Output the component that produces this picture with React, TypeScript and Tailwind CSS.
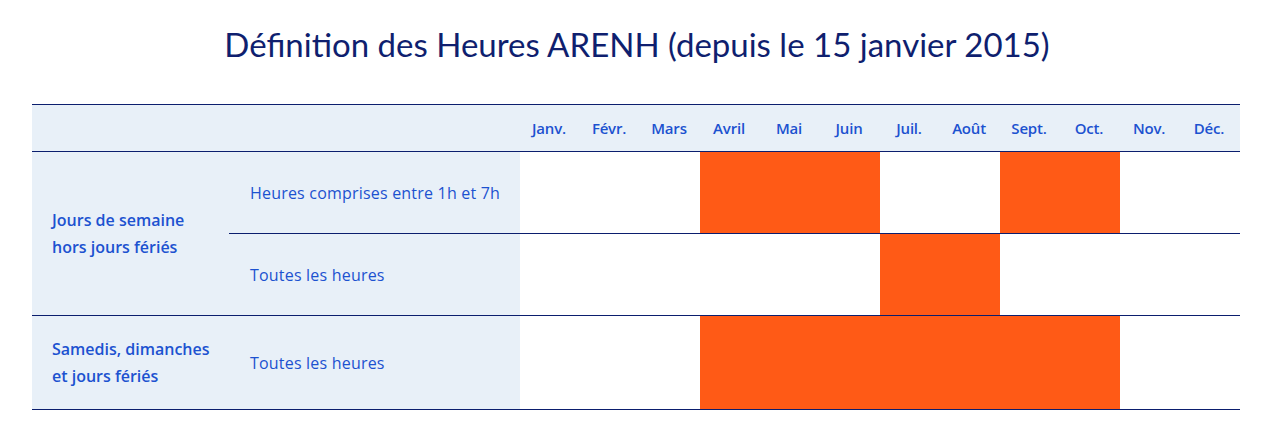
const months = ["Janv.", "Févr.", "Mars", "Avril", "Mai", "Juin", "Juil.", "Août", "Sept.", "Oct.", "Nov.", "Déc."];

// index of months that are ARENH hours, per row
const weekdayNight = [3, 4, 5, 8, 9];
const weekdayAll = [6, 7];
const weekendAll = [3, 4, 5, 6, 7, 8, 9];

function MonthCells({ active }: { active: number[] }) {
  return (
    <div className="grid flex-1 grid-cols-12">
      {months.map((m, i) => (
        <div key={m} className={active.includes(i) ? "bg-[#ff5a16]" : "bg-white"} />
      ))}
    </div>
  );
}

function SubRow({ label, active, className }: { label: string; active: number[]; className: string }) {
  return (
    <div className={`flex ${className}`}>
      <div className="flex w-[291px] items-center bg-[#e8f0f8] pl-[21px] text-[16px] tracking-[0.2px] text-[#1c52d0]">{label}</div>
      <MonthCells active={active} />
    </div>
  );
}

export default function App() {
  return (
    <div className="min-h-[436px] bg-white font-['Open_Sans',sans-serif]">
      <h1 className="pt-[22px] text-center text-[33px] font-normal leading-[44px] text-[#0f1f6f] font-['Lato',sans-serif]">
        Définition des Heures ARENH (depuis le 15 janvier 2015)
      </h1>

      <div className="ml-[32px] mt-[38px] w-[1208px]">
        {/* header */}
        <div className="flex h-[48px] border-y border-[#0b1e6e] bg-[#e8f0f8]">
          <div className="w-[488px]" />
          <div className="grid flex-1 grid-cols-12">
            {months.map((m) => (
              <div key={m} className="flex items-center justify-center pr-[2px] text-[15px] font-semibold tracking-[-0.2px] text-[#1c52d0]">
                {m}
              </div>
            ))}
          </div>
        </div>

        {/* weekdays */}
        <div className="flex border-b border-[#0b1e6e]">
          <div className="flex w-[197px] items-center bg-[#e8f0f8] pl-5 text-[16px] font-semibold leading-[27px] text-[#1c52d0]">
            <div>
              Jours de semaine
              <br />
              hors jours fériés
            </div>
          </div>
          <div className="flex flex-1 flex-col">
            <SubRow label="Heures comprises entre 1h et 7h" active={weekdayNight} className="h-[82px] border-b border-[#0b1e6e]" />
            <SubRow label="Toutes les heures" active={weekdayAll} className="h-[81px]" />
          </div>
        </div>

        {/* weekends */}
        <div className="flex h-[94px] border-b border-[#0b1e6e]">
          <div className="flex w-[197px] items-center bg-[#e8f0f8] pl-5 text-[16px] font-semibold leading-[27px] text-[#1c52d0]">
            <div>
              Samedis, dimanches
              <br />
              et jours fériés
            </div>
          </div>
          <SubRow label="Toutes les heures" active={weekendAll} className="flex-1" />
        </div>
      </div>
    </div>
  );
}
